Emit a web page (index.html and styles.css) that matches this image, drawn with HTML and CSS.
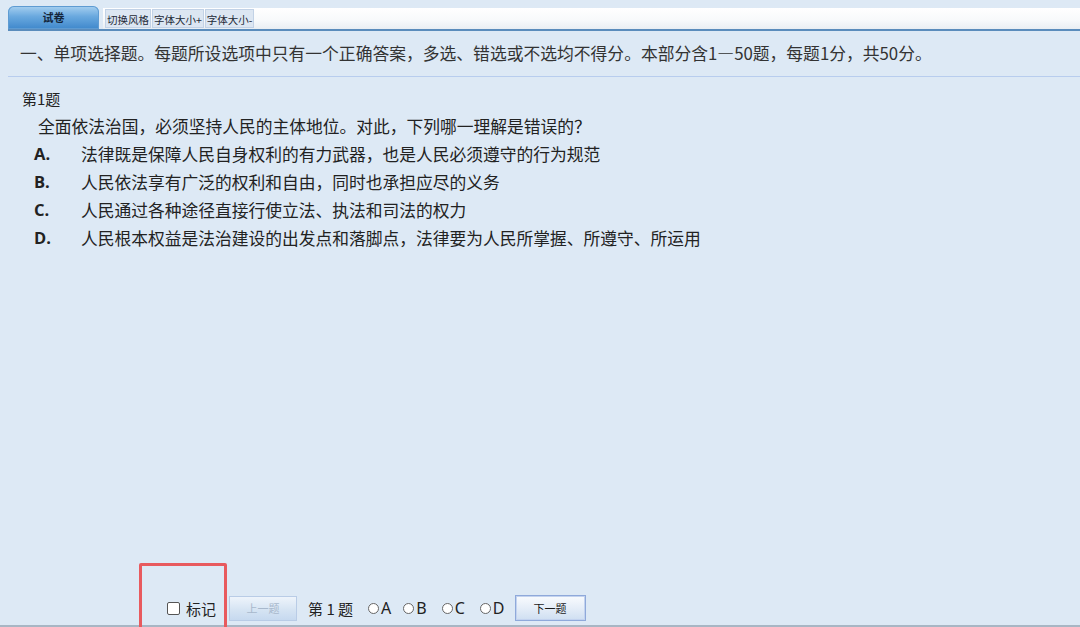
FILE: index.html
```html
<!DOCTYPE html>
<html lang="zh-CN">
<head>
<meta charset="utf-8">
<title>试卷</title>
<link rel="stylesheet" href="styles.css">
</head>
<body>
<div class="page">
  <div class="topbar">
    <div class="tab">试卷</div>
    <div class="toolbar">
      <span class="tbtn">切换风格</span>
      <span class="tbtn">字体大小+</span>
      <span class="tbtn">字体大小-</span>
    </div>
  </div>
  <div class="section-title">一、单项选择题。每题所设选项中只有一个正确答案，多选、错选或不选均不得分。本部分含1—50题，每题1分，共50分。</div>
  <div class="question">
    <div class="qno">第1题</div>
    <div class="qtext">全面依法治国，必须坚持人民的主体地位。对此，下列哪一理解是错误的？</div>
    <div class="opt"><span class="letter">A.</span><span class="otext">法律既是保障人民自身权利的有力武器，也是人民必须遵守的行为规范</span></div>
    <div class="opt"><span class="letter">B.</span><span class="otext">人民依法享有广泛的权利和自由，同时也承担应尽的义务</span></div>
    <div class="opt"><span class="letter">C.</span><span class="otext">人民通过各种途径直接行使立法、执法和司法的权力</span></div>
    <div class="opt"><span class="letter">D.</span><span class="otext">人民根本权益是法治建设的出发点和落脚点，法律要为人民所掌握、所遵守、所运用</span></div>
  </div>
  <div class="footer">
    <div class="highlight"></div>
    <span class="check"></span><span class="mark">标记</span>
    <span class="navbtn prev">上一题</span>
    <span class="qnum">第 1 题</span>
    <span class="radio r-a"><span class="dot"></span>A</span>
    <span class="radio r-b"><span class="dot"></span>B</span>
    <span class="radio r-c"><span class="dot"></span>C</span>
    <span class="radio r-d"><span class="dot"></span>D</span>
    <span class="navbtn next">下一题</span>
  </div>
</div>
</body>
</html>
```

FILE: styles.css
```css
html, body {
  margin: 0;
  padding: 0;
}
body {
  background: #dde9f5;
  font-family: "Noto Sans CJK SC", "Noto Sans", sans-serif;
  color: #2a2a2a;
}
.page {
  width: 1080px;
  height: 627px;
  display: flex;
  flex-direction: column;
  overflow: hidden;
  position: relative;
}
.topbar {
  margin-left: 8px;
  padding-top: 6px;
  display: flex;
  align-items: flex-end;
  border-bottom: 2px solid #5a8cbc;
  height: 23px;
}
.tab {
  width: 91px;
  height: 23px;
  border-radius: 6px 6px 0 0;
  background: linear-gradient(#a7d0f0, #6aa9df 45%, #3f88cc);
  color: #14263c;
  font-size: 11px;
  font-weight: bold;
  text-align: center;
  line-height: 23px;
  box-shadow: inset 0 0 0 1px #5e9bd2;
}
.toolbar {
  flex: 1;
  margin-left: 4px;
  height: 21px;
  background: linear-gradient(#ffffff, #f7f9fb 60%, #e9eef3);
  display: flex;
  align-items: center;
  padding-left: 2px;
  gap: 1px;
}
.tbtn {
  font-size: 10.5px;
  height: 19px;
  line-height: 19px;
  padding: 0 1px;
  background: #dce6f2;
  border: 1px solid #c2d2e6;
  box-sizing: border-box;
  color: #1e2a38;
}
.section-title {
  margin-left: 8px;
  padding-left: 12px;
  height: 45px;
  line-height: 45px;
  font-size: 16.8px;
  color: #333;
  border-bottom: 1px solid #b8cdee;
  white-space: nowrap;
}
.question {
  flex: 1;
  padding-top: 8px;
  line-height: 28px;
}
.qno {
  padding-left: 22px;
  font-size: 15px;
  color: #222;
}
.qtext {
  padding-left: 38px;
  font-size: 16.75px;
  line-height: 27px;
  color: #222;
}
.opt {
  display: flex;
  padding-left: 34px;
  font-size: 16.75px;
  color: #222;
}
.letter {
  width: 47px;
  font-family: "Open Sans", "Noto Sans", sans-serif;
  font-weight: bold;
  font-size: 16.5px;
}
.footer {
  height: 36px;
  display: flex;
  align-items: center;
  padding-left: 167px;
  border-bottom: 2px solid #a8b6c4;
  box-sizing: border-box;
  position: relative;
  font-size: 15px;
  color: #222;
}
.highlight {
  position: absolute;
  left: 139px;
  top: -28px;
  width: 88px;
  height: 80px;
  border: 3px solid #e85a5e;
  border-radius: 2px;
  box-sizing: border-box;
}
.check {
  width: 11px;
  height: 11px;
  border: 1px solid #555;
  border-radius: 2px;
  background: #fff;
  margin-right: 6px;
}
.mark {
  margin-right: 13px;
}
.navbtn {
  height: 25px;
  line-height: 23px;
  box-sizing: border-box;
  font-size: 11px;
  text-align: center;
}
.prev {
  width: 68px;
  color: #a8b8cc;
  border: 1px solid #b9cce6;
  background: linear-gradient(#eef4fb, #d6e4f3 55%, #c6d9ef);
  margin-right: 11px;
}
.qnum {
  margin-right: 15px;
}
.radio {
  display: flex;
  align-items: center;
  font-family: "Noto Sans", sans-serif;
  font-size: 16px;
}
.dot {
  width: 9px;
  height: 9px;
  border: 1px solid #666;
  border-radius: 50%;
  background: #fff;
  margin-right: 2px;
}
.r-a { margin-right: 12px; }
.r-b { margin-right: 15px; }
.r-c { margin-right: 15px; }
.r-d { margin-right: 10px; }
.next {
  width: 71px;
  height: 26px;
  line-height: 24px;
  color: #1a1a1a;
  border: 1px solid #8fa9da;
  box-shadow: inset 0 0 0 1px #c3d3ef;
  background: linear-gradient(#f9fbfe, #e3ecf7 55%, #cfdff2);
}
```
